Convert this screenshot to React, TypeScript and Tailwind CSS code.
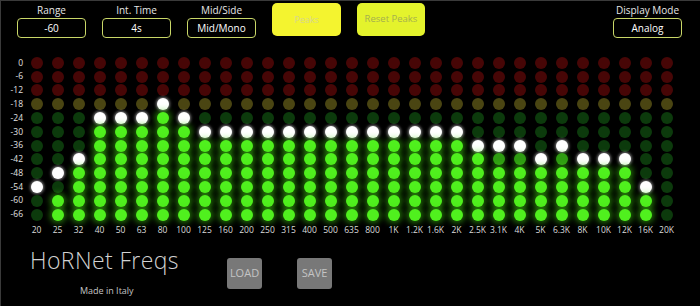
import React from "react";

// row labels, top (0 dB) to bottom (-66 dB)
const ROWS = ["0", "-6", "-12", "-18", "-24", "-30", "-36", "-42", "-48", "-54", "-60", "-66"];

interface Band {
  f: string;
  lit: number; // first fully lit row index (12 = nothing lit)
  peak: number; // row index of the peak hold dot
  mid?: number; // row drawn half-lit
}

const BANDS: Band[] = [
  { f: "20", lit: 12, peak: 9 },
  { f: "25", lit: 10, peak: 8 },
  { f: "32", lit: 8, peak: 7 },
  { f: "40", lit: 5, peak: 4 },
  { f: "50", lit: 5, peak: 4 },
  { f: "63", lit: 5, peak: 4 },
  { f: "80", lit: 4, peak: 3 },
  { f: "100", lit: 5, peak: 4 },
  { f: "125", lit: 6, peak: 5 },
  { f: "160", lit: 6, peak: 5 },
  { f: "200", lit: 6, peak: 5 },
  { f: "250", lit: 6, peak: 5 },
  { f: "315", lit: 6, peak: 5 },
  { f: "400", lit: 6, peak: 5 },
  { f: "500", lit: 6, peak: 5 },
  { f: "635", lit: 6, peak: 5 },
  { f: "800", lit: 6, peak: 5 },
  { f: "1K", lit: 6, peak: 5 },
  { f: "1.2K", lit: 6, peak: 5 },
  { f: "1.6K", lit: 6, peak: 5 },
  { f: "2K", lit: 6, peak: 5 },
  { f: "2.5K", lit: 7, peak: 6 },
  { f: "3.1K", lit: 8, peak: 6, mid: 7 },
  { f: "4K", lit: 8, peak: 6, mid: 7 },
  { f: "5K", lit: 8, peak: 7 },
  { f: "6.3K", lit: 8, peak: 6, mid: 7 },
  { f: "8K", lit: 8, peak: 7 },
  { f: "10K", lit: 8, peak: 7 },
  { f: "12K", lit: 8, peak: 7 },
  { f: "16K", lit: 10, peak: 9 },
  { f: "20K", lit: 12, peak: 12 },
];

function dotClass(band: Band, row: number) {
  if (row === band.peak) return "bg-white shadow-[0_0_3px_1px_rgba(255,255,255,0.5)]";
  if (row >= band.lit) return "bg-[#50f01e] shadow-[0_0_6px_2px_rgba(70,220,20,0.55)]";
  if (row === band.mid) return "bg-[#2f9c12] shadow-[0_0_4px_1px_rgba(50,160,20,0.4)]";
  if (row < 3) return "bg-[#470606]";
  if (row === 3) return "bg-[#4a4512]";
  return "bg-[#0c3a0c]";
}

function Field({ label, value }: { label: string; value: string }) {
  return (
    <div className="flex w-[69px] flex-col items-center">
      <span className="h-[15px] text-[10px] leading-[15px] text-[#e6e6e6]">{label}</span>
      <div className="flex h-[20px] w-full items-center justify-center rounded-[4px] border-[1.5px] border-[#c9d768] text-[10px] text-white">
        {value}
      </div>
    </div>
  );
}

function Meter() {
  return (
    <div className="mt-[18px] flex">
      <div className="flex w-[25px] flex-col">
        {ROWS.map((r) => (
          <div key={r} className="flex h-[13.8px] items-center justify-end pr-[3px] text-[8.5px] text-[#e0e0e0]">
            {r}
          </div>
        ))}
      </div>
      {BANDS.map((b) => (
        <div key={b.f} className="flex w-[21px] flex-col items-center">
          {ROWS.map((r, i) => (
            <div key={r} className="flex h-[13.8px] items-center justify-center">
              <div className={`h-[12px] w-[12px] rounded-full blur-[0.5px] ${dotClass(b, i)}`} />
            </div>
          ))}
          <div className="flex h-[17px] items-center text-[8.5px] text-[#dcdcdc]">{b.f}</div>
        </div>
      ))}
    </div>
  );
}

export default function App() {
  return (
    <div
      className="flex h-[306px] w-[700px] flex-col overflow-hidden border-l border-t border-[#3a3a3a] bg-black"
      style={{ fontFamily: '"Open Sans", "Noto Sans", sans-serif' }}
    >
      {/* Top controls */}
      <div className="flex pl-[16px] pr-[18px] pt-[2px]">
        <div className="flex gap-[16px]">
          <Field label="Range" value="-60" />
          <Field label="Int. Time" value="4s" />
          <Field label="Mid/Side" value="Mid/Mono" />
          <button className="h-[33px] w-[69px] rounded-[5px] bg-[#f4f42f] text-[9px] text-[#d6d68e]">Peaks</button>
          <button className="h-[33px] w-[68px] rounded-[5px] bg-[#e4f32c] text-[9.5px] text-[#a5b04e]">Reset Peaks</button>
        </div>
        <div className="ml-auto">
          <Field label="Display Mode" value="Analog" />
        </div>
      </div>

      <Meter />

      {/* Footer */}
      <div className="flex pl-[29px] pt-[6px]">
        <div className="flex w-[168px] flex-col">
          <span className="text-[23px] font-light leading-[30px] tracking-[0.4px] text-[#d2d2d2]">HoRNet Freqs</span>
          <span className="mt-[9px] pl-[50px] text-[9px] text-[#c4c4c4]">Made in Italy</span>
        </div>
        <div className="ml-[29px] mt-[13px] flex gap-[35px]">
          <button className="h-[31px] w-[35px] rounded-[3px] bg-[#787878] text-[11px] text-[#c4c4c4]">LOAD</button>
          <button className="h-[31px] w-[35px] rounded-[3px] bg-[#787878] text-[11px] text-[#c4c4c4]">SAVE</button>
        </div>
      </div>
    </div>
  );
}
